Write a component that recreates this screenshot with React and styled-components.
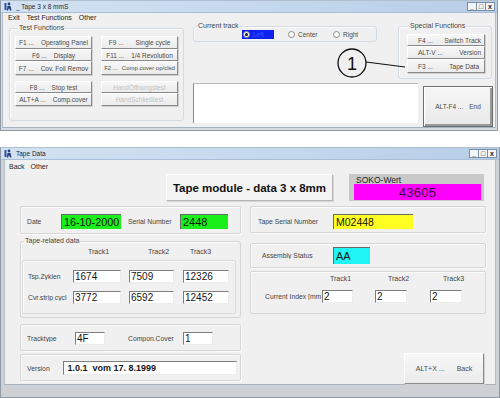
import React from 'react';
import styled, { createGlobalStyle } from 'styled-components';

const GlobalStyle = createGlobalStyle`
  html, body { margin: 0; padding: 0; background: #ffffff; }
  body { font-family: "Liberation Sans", Arial, sans-serif; color: #2a2a2a; overflow: hidden; }
  * { box-sizing: border-box; }
`;

const Page = styled.div`
  position: relative;
  width: 500px;
  height: 398px;
  display: flex;
  flex-direction: column;
  gap: 16px;
`;

const Window = styled.div`
  width: ${p => p.$w}px;
  height: ${p => p.$h}px;
  flex: none;
  display: flex;
  flex-direction: column;
  background: ${p => p.$frame || '#d5dce4'};
  border: 1px solid #8e9aa6;
  border-top-color: #b0bfcf;
  padding: 0 ${p => p.$side}px ${p => p.$bottom}px;
`;

const TitleBar = styled.div`
  height: 12px;
  flex: none;
  display: flex;
  align-items: center;
  gap: 3px;
  margin: 0 -${p => p.$side}px;
  padding: 0 2px 0 3px;
  background: linear-gradient(90deg, #d3e2f2 0%, #c4d8ed 55%, #b8cee7 100%);
  border-bottom: 1px solid #a9bfd7;
  font-size: 6.5px;
  color: #1c2838;
`;

const TitleText = styled.span`
  flex: 1;
  white-space: nowrap;
`;

const Controls = styled.div`
  display: flex;
`;

const CtrlBox = styled.span`
  width: 10px;
  height: 9px;
  display: flex;
  align-items: center;
  justify-content: center;
  border: 1px solid #7c8ea2;
  margin-left: -1px;
  background: #f2f6fa;
  font-size: 7px;
  line-height: 7px;
  font-weight: bold;
  color: #222;
`;

const Client = styled.div`
  flex: 1;
  display: flex;
  flex-direction: column;
  background: #f0f0f0;
  border-left: 1px solid #b4bec8;
  border-right: 1px solid #b4bec8;
  border-bottom: 1px solid #a8b2bc;
`;

const MenuBar = styled.div`
  height: ${p => p.$h}px;
  flex: none;
  display: flex;
  align-items: center;
  gap: ${p => p.$gap}px;
  padding-left: ${p => p.$pl}px;
  font-size: 7px;
  color: #1e1e1e;
`;

/* ---------- window 1 ---------- */

const Body1 = styled.div`
  flex: 1;
  display: flex;
  gap: 9px;
  padding: 0 0 0 6px;
`;

const Group = styled.fieldset`
  margin: ${p => p.$m || 0};
  min-width: 0;
  flex: none;
  width: ${p => p.$w}px;
  height: ${p => p.$h}px;
  border: 1px solid ${p => p.$bc || '#d3dbe3'};
  border-radius: 3px;
  padding: ${p => p.$pad || 0};
  box-shadow: inset 1px 1px 0 #fbfbfb;
`;

const Legend = styled.legend`
  font-size: 7px;
  line-height: 8px;
  padding: 0 1px;
  margin-left: ${p => p.$ml ?? 2}px;
  color: #444;
  white-space: nowrap;
`;

const ButtonGrid = styled.div`
  display: grid;
  grid-auto-flow: column;
  grid-template-columns: 77px 77px;
  grid-template-rows: 13px 12px 14px 6px 12px 13px;
  column-gap: 9px;
`;

const WinButton = styled.div`
  display: flex;
  align-items: center;
  justify-content: ${p => p.$justify || 'center'};
  gap: ${p => p.$gap ?? 7}px;
  width: ${p => (p.$w ? `${p.$w}px` : 'auto')};
  height: ${p => (p.$h ? `${p.$h}px` : 'auto')};
  padding: 0 ${p => p.$pr ?? 2}px 0 ${p => p.$pl ?? 2}px;
  background: linear-gradient(#f7f7f7, #ebebeb);
  border: 1px solid;
  border-color: #ffffff #8a8a8a #8a8a8a #ffffff;
  box-shadow: 1px 1px 0 #d0d0d0;
  font-size: ${p => p.$fs ?? 6.5}px;
  color: ${p => (p.$disabled ? '#c2c2c2' : '#4a4a4a')};
  white-space: nowrap;
  overflow: hidden;
`;

const Spacer = styled.div``;

const RightArea = styled.div`
  width: 300px;
  display: flex;
  flex-direction: column;
`;

const TopRow = styled.div`
  display: flex;
  align-items: flex-start;
  gap: 21px;
`;

const RadioRow = styled.div`
  display: flex;
  align-items: center;
  height: 9px;
  padding-left: 48px;
`;

const RadioItem = styled.div`
  display: flex;
  align-items: center;
  gap: 3px;
  width: ${p => p.$w}px;
  height: 9px;
  padding-left: 1px;
  font-size: 6.5px;
  color: ${p => (p.$selected ? '#3b5bff' : '#4a4a4a')};
  background: ${p => (p.$selected ? '#1020f0' : 'transparent')};
  margin-right: ${p => p.$mr || 0}px;
`;

const RadioDot = styled.span`
  width: 7px;
  height: 7px;
  flex: none;
  border-radius: 50%;
  border: 1px solid #8a8a8a;
  background: #fff;
  display: flex;
  align-items: center;
  justify-content: center;
  &::after {
    content: '';
    width: 3px;
    height: 3px;
    border-radius: 50%;
    background: ${p => (p.$on ? '#111' : 'transparent')};
  }
`;

const SpecialStack = styled.div`
  display: flex;
  flex-direction: column;
`;

const BottomRow = styled.div`
  display: flex;
  align-items: flex-start;
  gap: 5px;
  margin-top: 4px;
`;

const Output = styled.div`
  width: 225px;
  height: 40px;
  background: #ffffff;
  border-left: 1px solid #8a8a8a;
  border-top: 1px solid #b8b8b8;
`;

const EndButton = styled.div`
  margin-top: 3px;
  width: 70px;
  height: 41px;
  display: flex;
  align-items: center;
  justify-content: center;
  gap: 6px;
  font-size: 6.5px;
  color: #4a4a4a;
  background: linear-gradient(#f6f6f6, #e9e9e9);
  border: 1px solid #6e6e6e;
  box-shadow: inset 1px 1px 0 #ffffff, inset -2px -2px 0 #9a9a9a, inset 2px 2px 0 #f4f4f4;
`;

const Callout = styled.svg`
  position: absolute;
  left: 336px;
  top: 47px;
  overflow: visible;
`;

/* ---------- window 2 ---------- */

const Body2 = styled.div`
  flex: 1;
  display: flex;
  flex-direction: column;
  padding: 2px 0 0 15px;
`;

const HeaderRow = styled.div`
  display: flex;
  align-items: flex-start;
  gap: 16px;
  padding-left: 146px;
  height: 27px;
`;

const HeadlineButton = styled.div`
  width: 167px;
  height: 27px;
  display: flex;
  align-items: center;
  justify-content: center;
  font-size: 11.5px;
  font-weight: bold;
  color: #111;
  background: #f3f3f3;
  border: 1px solid;
  border-color: #ffffff #b5b5b5 #b5b5b5 #ffffff;
  box-shadow: 1px 1px 0 #d6d6d6;
  white-space: nowrap;
`;

const SokoBox = styled.div`
  width: 135px;
  height: 27px;
  display: flex;
  flex-direction: column;
  background: #c9c9c9;
  padding: 2px 3px 1px 5px;
`;

const SokoLabel = styled.span`
  font-size: 8.5px;
  line-height: 8px;
  color: #1a1a1a;
  padding-left: 2px;
`;

const SokoValue = styled.div`
  flex: 1;
  display: flex;
  align-items: center;
  justify-content: center;
  background: #ff00ff;
  font-size: 13px;
  color: #3c0a3c;
  letter-spacing: 0.3px;
`;

const Columns = styled.div`
  display: grid;
  grid-template-columns: 221px 236px;
  column-gap: 9px;
  margin-top: 5px;
`;

const Column = styled.div`
  display: flex;
  flex-direction: column;
`;

const Panel = styled.div`
  display: flex;
  align-items: center;
  flex: none;
  height: ${p => p.$h}px;
  margin-top: ${p => p.$mt || 0}px;
  padding: ${p => p.$pad || '0 0 0 6px'};
  border: 1px solid #d6d6d6;
  border-radius: 2px;
  box-shadow: inset 1px 1px 0 #fbfbfb, 1px 1px 0 #fbfbfb;
`;

const Label = styled.span`
  flex: none;
  width: ${p => p.$w}px;
  margin-left: ${p => p.$ml || 0}px;
  font-size: 6.8px;
  color: #444;
  white-space: nowrap;
  overflow: hidden;
`;

const ColorField = styled.div`
  flex: none;
  width: ${p => p.$w}px;
  height: ${p => p.$h}px;
  display: flex;
  align-items: center;
  padding-left: 2px;
  background: ${p => p.$bg};
  border-top: 1px solid #6a6a6a;
  border-left: 1px solid #6a6a6a;
  font-size: ${p => p.$fs}px;
  color: #151515;
  white-space: nowrap;
  overflow: hidden;
`;

const Input = styled.div`
  flex: none;
  width: ${p => p.$w}px;
  height: ${p => p.$h || 13}px;
  margin-left: ${p => p.$ml || 0}px;
  display: flex;
  align-items: center;
  padding-left: 1px;
  background: #ffffff;
  border-top: 1px solid #7d7d7d;
  border-left: 1px solid #7d7d7d;
  border-right: 1px solid #ececec;
  border-bottom: 1px solid #ececec;
  font-size: ${p => p.$fs || 10}px;
  font-weight: ${p => (p.$bold ? 'bold' : 'normal')};
  color: #151515;
  white-space: nowrap;
  overflow: hidden;
`;

const TrackHeads = styled.div`
  display: flex;
  height: ${p => p.$h || 9}px;
  margin-top: ${p => p.$mt || 0}px;
  padding-left: ${p => p.$pl}px;
  font-size: 7px;
  color: #444;
`;

const TrackHead = styled.span`
  width: ${p => p.$w}px;
  flex: none;
`;

const InnerBox = styled.div`
  margin-top: 3px;
  height: 54px;
  display: flex;
  flex-direction: column;
  justify-content: center;
  gap: 8px;
  padding-left: 5px;
  border: 1px solid #dadada;
  border-radius: 2px;
  box-shadow: inset 1px 1px 0 #fbfbfb;
`;

const Row = styled.div`
  display: flex;
  align-items: center;
  padding-left: ${p => p.$pl || 0}px;
  margin-top: ${p => p.$mt || 0}px;
`;

const TrackPanel = styled.div`
  margin-top: 3px;
  height: 43px;
  display: flex;
  flex-direction: column;
  border: 1px solid #d6d6d6;
  border-radius: 2px;
  box-shadow: inset 1px 1px 0 #fbfbfb;
`;

const BackButton = styled(WinButton)`
  align-self: flex-end;
  margin-top: 39px;
  margin-right: 2px;
  gap: 12px;
`;

const AppIcon = () => (
  <svg width="9" height="9" viewBox="0 0 9 9">
    <rect x="0.5" y="1" width="2" height="7" fill="#2d4fa8" />
    <circle cx="5" cy="2" r="1.4" fill="#2b3f7a" />
    <path d="M3.5 4 L6.5 4 L7.5 8.5 L6 8.5 L5 6 L4 8.5 L2.8 8.5 Z" fill="#2b3f7a" />
  </svg>
);

const Title = ({ text, side }) => (
  <TitleBar $side={side}>
    <AppIcon />
    <TitleText>{text}</TitleText>
    <Controls>
      <CtrlBox>_</CtrlBox>
      <CtrlBox>□</CtrlBox>
      <CtrlBox>x</CtrlBox>
    </Controls>
  </TitleBar>
);

export default function App() {
  return (
    <>
      <GlobalStyle />
      <Page>
        <Window $w={498} $h={131} $side={1} $bottom={2}>
          <Title text="_  Tape 3 x 8 mmS" side={1} />
          <Client>
            <MenuBar $h={9} $gap={7} $pl={5}>
              <span>Exit</span>
              <span>Test Functions</span>
              <span>Other</span>
            </MenuBar>
            <Body1>
              <Group $w={175} $h={97} $m="2px 0 0 0" $pad="4px 5px 0 5px">
                <Legend $ml={3}>Test Functions</Legend>
                <ButtonGrid>
                  <WinButton><span>F1 ...</span><span>Operating Panel</span></WinButton>
                  <WinButton><span>F6 ...</span><span>Display</span></WinButton>
                  <WinButton><span>F7 ...</span><span>Cov. Foil Remov</span></WinButton>
                  <Spacer />
                  <WinButton><span>F8 ...</span><span>Stop test</span></WinButton>
                  <WinButton><span>ALT+A ...</span><span>Comp.cover</span></WinButton>
                  <WinButton $gap={12}><span>F9 ...</span><span>Single cycle</span></WinButton>
                  <WinButton><span>F11 ...</span><span>1/4 Revolution</span></WinButton>
                  <WinButton $gap={4} $fs={6}><span>F2 ...</span><span>Comp.cover op/clsd</span></WinButton>
                  <Spacer />
                  <WinButton $disabled>HandÖffnungstest</WinButton>
                  <WinButton $disabled>HandSchließtest</WinButton>
                </ButtonGrid>
              </Group>
              <RightArea>
                <TopRow>
                  <Group $w={184} $h={20} $pad="0 0 0 0">
                    <Legend $ml={3}>Current track</Legend>
                    <RadioRow>
                      <RadioItem $w={32} $mr={13} $selected><RadioDot $on /><span>Left</span></RadioItem>
                      <RadioItem $w={45}><RadioDot /><span>Center</span></RadioItem>
                      <RadioItem $w={40}><RadioDot /><span>Right</span></RadioItem>
                    </RadioRow>
                  </Group>
                  <Group $w={94} $h={57} $pad="4px 6px 0 8px">
                    <Legend $ml={2}>Special Functions</Legend>
                    <SpecialStack>
                      <WinButton $h={12} $justify="space-between" $pl={10} $pr={3}><span>F4 ...</span><span>Switch Track</span></WinButton>
                      <WinButton $h={13} $justify="space-between" $pl={10} $pr={3}><span>ALT-V ...</span><span>Version</span></WinButton>
                      <WinButton $h={14} $justify="space-between" $pl={10} $pr={5}><span>F3 ...</span><span>Tape Data</span></WinButton>
                    </SpecialStack>
                  </Group>
                </TopRow>
                <BottomRow>
                  <Output />
                  <EndButton><span>ALT-F4 ...</span><span>End</span></EndButton>
                </BottomRow>
              </RightArea>
            </Body1>
          </Client>
        </Window>

        <Window $w={500} $h={251} $side={3} $bottom={12} $frame="#cdd0d4">
          <Title text="Tape Data" side={3} />
          <Client>
            <MenuBar $h={12} $gap={6} $pl={4}>
              <span>Back</span>
              <span>Other</span>
            </MenuBar>
            <Body2>
              <HeaderRow>
                <HeadlineButton>Tape module - data 3 x 8mm</HeadlineButton>
                <SokoBox>
                  <SokoLabel>SOKO-Wert</SokoLabel>
                  <SokoValue>43605</SokoValue>
                </SokoBox>
              </HeaderRow>
              <Columns>
                <Column>
                  <Panel $h={28} $pad="3px 0 0 6px">
                    <Label $w={34}>Date</Label>
                    <ColorField $w={60} $h={15} $bg="#19f019" $fs={10.8}>16-10-2000</ColorField>
                    <Label $w={52} $ml={7}>Serial Number</Label>
                    <ColorField $w={48} $h={15} $bg="#19f019" $fs={11}>2448</ColorField>
                  </Panel>
                  <Group $w={221} $h={81} $m="3px 0 0 0" $pad="0 4px 2px 1px" $bc="#d6d6d6">
                    <Legend $ml={2}>Tape-related data</Legend>
                    <TrackHeads $pl={66} $mt={3}>
                      <TrackHead $w={60}>Track1</TrackHead>
                      <TrackHead $w={42}>Track2</TrackHead>
                      <TrackHead $w={40}>Track3</TrackHead>
                    </TrackHeads>
                    <InnerBox>
                      <Row>
                        <Label $w={45}>Tsp.Zyklen</Label>
                        <Input $w={48}>1674</Input>
                        <Input $w={45} $ml={8}>7509</Input>
                        <Input $w={46} $ml={9}>12326</Input>
                      </Row>
                      <Row>
                        <Label $w={45}>Cvr.strip cycl</Label>
                        <Input $w={48}>3772</Input>
                        <Input $w={45} $ml={8}>6592</Input>
                        <Input $w={46} $ml={9}>12452</Input>
                      </Row>
                    </InnerBox>
                  </Group>
                  <Panel $h={27} $mt={6} $pad="1px 0 0 6px">
                    <Label $w={48}>Tracktype</Label>
                    <Input $w={30}>4F</Input>
                    <Label $w={55} $ml={23}>Compon.Cover</Label>
                    <Input $w={30}>1</Input>
                  </Panel>
                  <Panel $h={27} $mt={3} $pad="1px 0 0 6px">
                    <Label $w={36}>Version</Label>
                    <Input $w={174} $h={14} $fs={9} $bold>&nbsp;1.0.1&nbsp; vom 17. 8.1999</Input>
                  </Panel>
                </Column>
                <Column>
                  <Panel $h={27} $pad="3px 0 0 7px">
                    <Label $w={75}>Tape Serial Number</Label>
                    <ColorField $w={80} $h={15} $bg="#ffff22" $fs={10.5}>M02448</ColorField>
                  </Panel>
                  <Panel $h={25} $mt={10} $pad="0 0 0 11px">
                    <Label $w={71}>Assembly Status</Label>
                    <ColorField $w={37} $h={17} $bg="#1ff5f5" $fs={11}>AA</ColorField>
                  </Panel>
                  <TrackPanel>
                    <TrackHeads $pl={79} $mt={3} $h={12}>
                      <TrackHead $w={58}>Track1</TrackHead>
                      <TrackHead $w={55}>Track2</TrackHead>
                      <TrackHead $w={40}>Track3</TrackHead>
                    </TrackHeads>
                    <Row $pl={14} $mt={3}>
                      <Label $w={57}>Current Index [mm</Label>
                      <Input $w={31}>2</Input>
                      <Input $w={32} $ml={22}>2</Input>
                      <Input $w={32} $ml={23}>2</Input>
                    </Row>
                  </TrackPanel>
                  <BackButton $w={80} $h={31} $fs={7}><span>ALT+X ...</span><span>Back</span></BackButton>
                </Column>
              </Columns>
            </Body2>
          </Client>
        </Window>

        <Callout width="72" height="34" viewBox="0 0 72 34">
          <circle cx="16" cy="16" r="14" fill="none" stroke="#111" strokeWidth="1.3" />
          <text x="16" y="22.5" textAnchor="middle" fontSize="18" fontFamily="Liberation Sans, Arial, sans-serif" fill="#111">1</text>
          <line x1="30" y1="15" x2="69" y2="20" stroke="#111" strokeWidth="1.2" />
        </Callout>
      </Page>
    </>
  );
}
